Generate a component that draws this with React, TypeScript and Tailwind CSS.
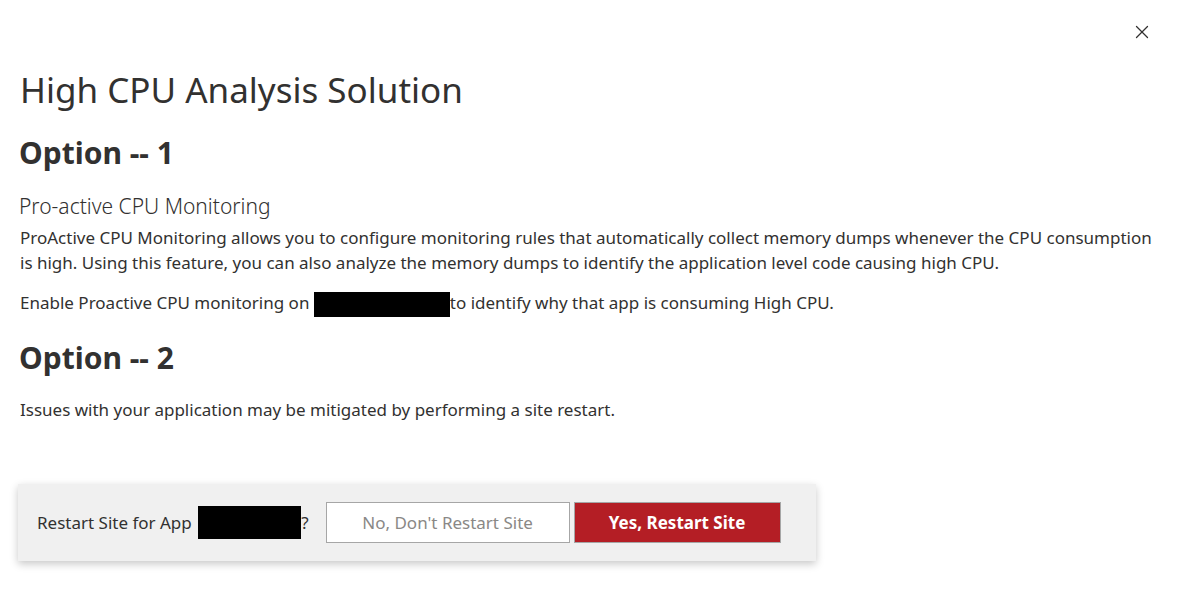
import { X } from 'lucide-react'

function Redacted({ className }: { className: string }) {
  return <span className={`inline-block bg-black align-middle ${className}`} />
}

export default function App() {
  return (
    <div className="relative h-[608px] w-[1178px] bg-white font-['Noto_Sans',sans-serif] text-[#323130]">
      {/* Close */}
      <button className="absolute right-[21px] top-[17px] p-1 text-[#323130]" title="Close">
        <X className="h-[22px] w-[22px]" strokeWidth={1.4} />
      </button>

      <div className="px-5 pt-[66px]">
        <h1 className="text-[35px] leading-[48px] font-normal">High CPU Analysis Solution</h1>

        <h2 className="mt-[20px] -ml-px text-[30px] font-bold leading-[38px]">Option -- 1</h2>

        <div className="mt-[20px] -ml-px text-[21px] font-light leading-[28px]">Pro-active CPU Monitoring</div>
        <p className="mt-[5px] text-[17px] leading-[25px]">
          ProActive CPU Monitoring allows you to configure monitoring rules that automatically collect memory dumps
          whenever the CPU consumption is high. Using this feature, you can also analyze the memory dumps to identify
          the application level code causing high CPU.
        </p>
        <p className="mt-[15px] text-[17px] leading-[25px]">
          Enable Proactive CPU monitoring on <Redacted className="h-[25px] w-[136px]" />
          to identify why that app is consuming High CPU.
        </p>

        <h2 className="mt-[22px] -ml-px text-[30px] font-bold leading-[38px]">Option -- 2</h2>

        <p className="mt-[20px] text-[17px] leading-[25px]">
          Issues with your application may be mitigated by performing a site restart.
        </p>
      </div>

      {/* Restart confirmation */}
      <div className="ml-[18px] mt-[62px] flex w-[798px] items-center bg-[#f0f0f0] py-[18px] pl-[19px] shadow-[0_3px_8px_rgba(0,0,0,0.22)]">
        <span className="flex items-center text-[17px]">
          Restart Site for App&nbsp;
          <Redacted className="ml-[2px] h-[33px] w-[103px]" />?
        </span>
        <button className="ml-[17px] h-[41px] w-[244px] border border-[#a6a6a6] bg-white text-[17px] text-[#8a8886]">
          No, Don't Restart Site
        </button>
        <button className="ml-[4px] h-[41px] w-[207px] border border-[#a6a6a6] bg-[#b41e25] text-[17px] font-bold text-white">
          Yes, Restart Site
        </button>
      </div>
    </div>
  )
}
